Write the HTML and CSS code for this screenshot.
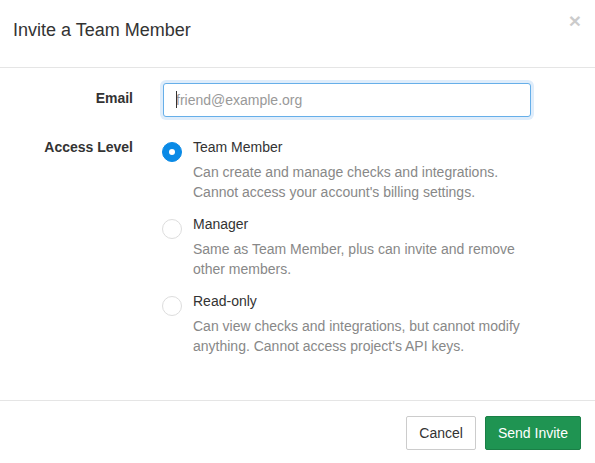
FILE: index.html
```html
<!DOCTYPE html>
<html>
<head>
<meta charset="utf-8">
<link rel="stylesheet" href="styles.css">
</head>
<body>
<div class="modal">
  <div class="modal-header">
    <h4 class="modal-title">Invite a Team Member</h4>
    <button class="close" type="button">&times;</button>
  </div>
  <div class="modal-body">
    <div class="form-group">
      <label class="control-label">Email</label>
      <div class="input-wrap">
        <input class="form-control" type="email" placeholder="friend@example.org">
        <span class="caret-line"></span>
      </div>
    </div>
    <div class="form-group">
      <label class="control-label">Access Level</label>
      <div class="options">
        <div class="option">
          <span class="radio checked"></span>
          <div class="option-text">
            <div class="option-title">Team Member</div>
            <div class="option-desc">Can create and manage checks and integrations.<br>Cannot access your account's billing settings.</div>
          </div>
        </div>
        <div class="option">
          <span class="radio"></span>
          <div class="option-text">
            <div class="option-title">Manager</div>
            <div class="option-desc">Same as Team Member, plus can invite and remove<br>other members.</div>
          </div>
        </div>
        <div class="option">
          <span class="radio"></span>
          <div class="option-text">
            <div class="option-title">Read-only</div>
            <div class="option-desc">Can view checks and integrations, but cannot modify<br>anything. Cannot access project's API keys.</div>
          </div>
        </div>
      </div>
    </div>
  </div>
  <div class="modal-footer">
    <button class="btn btn-default" type="button">Cancel</button>
    <button class="btn btn-primary" type="button">Send Invite</button>
  </div>
</div>
</body>
</html>
```

FILE: styles.css
```css
* { box-sizing: border-box; }
html, body { margin: 0; padding: 0; background: #fff; }
body {
  font-family: "Liberation Sans", Arial, Helvetica, sans-serif;
  font-size: 14px;
  line-height: 20px;
  color: #333;
  overflow: hidden;
}
.modal { width: 595px; height: 463px; background: #fff; }
.modal-header {
  display: flex;
  justify-content: space-between;
  align-items: flex-start;
  padding: 17px 14px 0 13px;
  height: 68px;
  border-bottom: 1px solid #e5e5e5;
}
.modal-title {
  margin: 0;
  font-size: 18px;
  font-weight: normal;
  line-height: 26px;
  color: #333;
}
.close {
  border: 0;
  background: none;
  padding: 0;
  margin: -7px 0 0 0;
  font-family: "Liberation Sans", Arial, sans-serif;
  font-size: 21px;
  font-weight: bold;
  line-height: 21px;
  color: #000;
  opacity: .2;
}
.modal-body {
  padding: 15px 0 0 0;
  height: 333px;
  border-bottom: 1px solid #e5e5e5;
}
.form-group {
  display: grid;
  grid-template-columns: 133px 368px;
  column-gap: 30px;
  margin-bottom: 15px;
}
.control-label {
  text-align: right;
  font-weight: bold;
  padding-top: 5px;
}
.input-wrap { position: relative; }
.form-control {
  display: block;
  width: 368px;
  height: 34px;
  padding: 6px 12px;
  font-family: inherit;
  font-size: 14px;
  color: #555;
  border: 1px solid #66afe9;
  border-radius: 3px;
  outline: 0;
  box-shadow: 0 0 0 3px #dfedfb;
}
.form-control::placeholder { color: #999; }
.caret-line {
  position: absolute;
  left: 13px;
  top: 8px;
  width: 1px;
  height: 17px;
  background: #333;
}
.options { padding-top: 5px; }
.option {
  display: flex;
  align-items: flex-start;
  margin-bottom: 12px;
}
.radio {
  flex: none;
  width: 20px;
  height: 20px;
  margin: 5px 11px 0 -1px;
  border-radius: 50%;
  border: 1px solid #ddd;
  background: #fff;
  position: relative;
}
.radio.checked {
  border-color: #0a8ae6;
  background: #0a8ae6;
}
.radio.checked::after {
  content: "";
  position: absolute;
  left: 6px;
  top: 6px;
  width: 6px;
  height: 6px;
  border-radius: 50%;
  background: #fff;
}
.option-title { color: #333; }
.option-desc { color: #888; margin-top: 5px; }
.modal-footer {
  display: flex;
  justify-content: flex-end;
  gap: 9px;
  padding: 15px 14px 0 0;
}
.btn {
  font-family: inherit;
  font-size: 14px;
  line-height: 20px;
  height: 34px;
  padding: 6px 12px;
  border-radius: 2px;
  border: 1px solid transparent;
  white-space: nowrap;
}
.btn-default { background: #fff; border-color: #ccc; color: #333; }
.btn-primary { background: #1f9452; border-color: #1a7f46; color: #fff; }
```
